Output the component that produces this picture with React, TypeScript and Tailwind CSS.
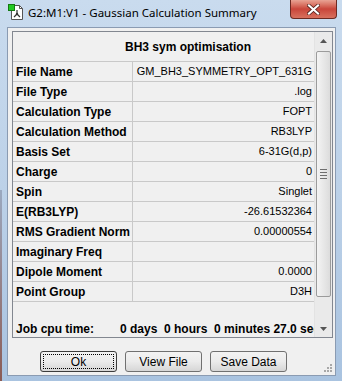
import React from "react";

const rows: [string, string][] = [
    ["File Name", "GM_BH3_SYMMETRY_OPT_631G"],
    ["File Type", ".log"],
    ["Calculation Type", "FOPT"],
    ["Calculation Method", "RB3LYP"],
    ["Basis Set", "6-31G(d,p)"],
    ["Charge", "0"],
    ["Spin", "Singlet"],
    ["E(RB3LYP)", "-26.61532364"],
    ["RMS Gradient Norm", "0.00000554"],
    ["Imaginary Freq", ""],
    ["Dipole Moment", "0.0000"],
    ["Point Group", "D3H"],
];

const AppIcon: React.FC = () => (
    <svg width="16" height="17" viewBox="0 0 16 17">
        <path d="M3.5 1.5h8l3 3v11h-11z" fill="#fff" stroke="#555" />
        <path d="M11.5 1.5v3h3" fill="none" stroke="#555" />
        <rect x="0.5" y="0.5" width="6" height="6" fill="#22c922" stroke="#137a13" />
        <path d="M9 6v4M9 10l-3 3M9 10l3 3" stroke="#333" strokeWidth="1.2" fill="none" />
        <circle cx="9" cy="10" r="1.2" fill="#333" />
    </svg>
);

const Btn: React.FC<{ label: string, focused?: boolean }> = ({ label, focused }) => (
    <button className={"w-[77px] h-[21px] rounded-[3px] border bg-gradient-to-b from-[#f3f3f3] via-[#ebebeb] to-[#d6d6d6] text-[12px] text-black flex items-center justify-center p-[2px] " + (focused ? "border-[#3c3c3c]" : "border-[#707070]")}>
        <span className={"w-full h-full flex items-center justify-center " + (focused ? "border border-dotted border-black" : "")}>{label}</span>
    </button>
);

export default function App() {
    return (
        <div className="w-[342px] h-[381px] flex flex-col bg-gradient-to-b from-[#c9dbee] via-[#bcd1e8] to-[#a9c3e0] relative overflow-hidden" style={{ fontFamily: '"Liberation Sans", Arial, sans-serif' }}>
            {/* desktop showing through on the left edge */}
            <div className="absolute left-0 top-[190px] w-[2px] h-[191px] bg-gradient-to-b from-[#9aa9c0] to-[#8a5b55]" />

            {/* title bar */}
            <div className="h-[27px] flex items-start pl-[8px] pt-[4px] relative">
                <AppIcon />
                <span className="ml-[4px] text-[11.5px] leading-[17px] text-black" style={{ fontFamily: '"Noto Sans", "Open Sans", sans-serif' }}>
                    G2:M1:V1 - Gaussian Calculation Summary
                </span>
                <div className="absolute right-[5px] top-0 w-[47px] h-[19px] rounded-b-[4px] border border-t-0 border-[#6d2a22] bg-gradient-to-b from-[#e8a394] via-[#c9453a] to-[#d8705e] flex items-center justify-center">
                    <svg width="13" height="11" viewBox="0 0 13 11">
                        <path d="M2 1.5l9 8M11 1.5l-9 8" stroke="#4a1a14" strokeWidth="3.6" strokeLinecap="square" />
                        <path d="M2 1.5l9 8M11 1.5l-9 8" stroke="#fff" strokeWidth="2.2" strokeLinecap="square" />
                    </svg>
                </div>
            </div>

            {/* client area */}
            <div className="ml-[7px] mr-[6px] mb-[5px] flex-1 border border-[#8a9bb2] bg-[#f0f0f0] flex flex-col">
                <div className="mt-[3px] ml-[4px] mr-[2px] h-[307px] border border-[#828790] flex">
                    <div className="flex-1 overflow-hidden">
                        <div className="h-[30px] border-b border-[#c9c9c9] flex items-center pl-[112px] text-[12px] font-bold text-black whitespace-nowrap">
                            BH3 sym optimisation
                        </div>
                        {rows.map(([k, v]) => (
                            <div key={k} className="h-[20px] border-b border-[#c9c9c9] flex text-black">
                                <div className="w-[120px] border-r border-[#c9c9c9] pl-[3px] text-[12px] font-bold flex items-center whitespace-nowrap">{k}</div>
                                <div className="flex-1 pr-[2px] text-[11px] flex items-center justify-end whitespace-nowrap overflow-hidden">{v}</div>
                            </div>
                        ))}
                        <div className="h-[20px]" />
                        <div className="h-[15px] leading-[15px] flex pl-[3px] text-[12px] font-bold text-black whitespace-nowrap overflow-hidden">
                            <span className="w-[104px] shrink-0">Job cpu time:</span>
                            <span>0 days&nbsp; 0 hours&nbsp; 0 minutes 27.0 sec</span>
                        </div>
                    </div>
                    {/* scrollbar */}
                    <div className="w-[18px] bg-[#eaeaea] border-l border-[#e3e3e3] flex flex-col items-center">
                        <div className="h-[17px] flex items-center justify-center">
                            <svg width="7" height="4" viewBox="0 0 7 4"><path d="M3.5 0L7 4H0z" fill="#555" /></svg>
                        </div>
                        <div className="w-[15px] h-[246px] mt-[2px] rounded-[2px] border border-[#9b9b9b] bg-gradient-to-r from-[#f4f4f4] to-[#dcdcdc] flex flex-col items-center justify-center gap-[2px]">
                            <div className="w-[7px] h-px bg-[#6e6e6e]" />
                            <div className="w-[7px] h-px bg-[#6e6e6e]" />
                            <div className="w-[7px] h-px bg-[#6e6e6e]" />
                            <div className="w-[7px] h-px bg-[#6e6e6e]" />
                        </div>
                        <div className="flex-1" />
                        <div className="h-[17px] flex items-center justify-center">
                            <svg width="7" height="4" viewBox="0 0 7 4"><path d="M0 0H7L3.5 4z" fill="#555" /></svg>
                        </div>
                    </div>
                </div>

                <div className="flex-1 flex items-start pt-[13px] pl-[32px] gap-[8px] relative">
                    <Btn label="Ok" focused />
                    <Btn label="View File" />
                    <Btn label="Save Data" />
                    <svg className="absolute right-[3px] bottom-[3px]" width="9" height="9" viewBox="0 0 9 9">
                        <g fill="#a8a8a8">
                            <rect x="7" y="1" width="2" height="2" />
                            <rect x="4" y="4" width="2" height="2" />
                            <rect x="7" y="4" width="2" height="2" />
                            <rect x="1" y="7" width="2" height="2" />
                            <rect x="4" y="7" width="2" height="2" />
                            <rect x="7" y="7" width="2" height="2" />
                        </g>
                    </svg>
                </div>
            </div>
        </div>
    );
}
